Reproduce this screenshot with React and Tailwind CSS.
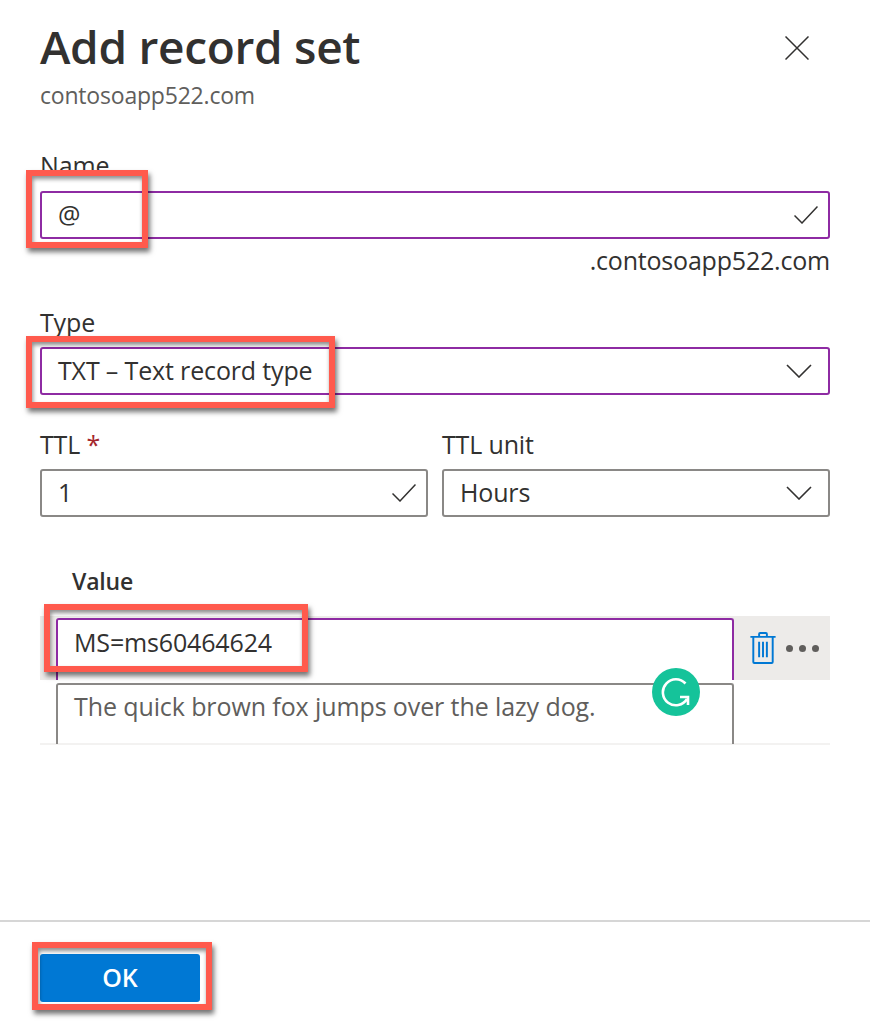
import React from 'react';

const font = "font-['Open_Sans','Noto_Sans',sans-serif]";

function Field({ value, border = 'border-[#8a8886]', icon, className = '' }) {
  return (
    <div className={`flex h-12 items-center justify-between rounded-[3px] border-2 ${border} pl-[16px] pr-[10px] text-[25px] tracking-[-0.15px] text-[#323130] ${className}`}>
      <span>{value}</span>
      {icon}
    </div>
  );
}

const CheckIcon = () => (
  <svg width="24" height="18" viewBox="0 0 24 18" fill="none" stroke="#323130" strokeWidth="1.5">
    <path d="M0.5 9.5L8 17L23.5 0.5" />
  </svg>
);

const Chevron = () => (
  <svg className="mr-[6px]" width="26" height="14" viewBox="0 0 26 14" fill="none" stroke="#323130" strokeWidth="1.6">
    <path d="M1 1L13 13L25 1" />
  </svg>
);

function Callout({ className }) {
  return (
    <div className={`pointer-events-none absolute border-[6px] border-[#ff5a4d] shadow-[2px_4px_5px_rgba(0,0,0,0.55),inset_1px_3px_4px_rgba(0,0,0,0.45)] ${className}`} />
  );
}

export default function App() {
  return (
    <div className={`relative h-[1032px] w-[870px] overflow-hidden bg-white ${font}`}>
      <div className="flex items-start justify-between pl-10 pr-[61px] pt-[15px]">
        <h1 className="text-[46px] font-semibold leading-[62px] tracking-[-0.3px] text-[#323130]">Add record set</h1>
        <svg className="mt-[21px]" width="24" height="24" viewBox="0 0 24 24" fill="none" stroke="#323130" strokeWidth="1.5">
          <path d="M0.5 0.5L23.5 23.5M23.5 0.5L0.5 23.5" />
        </svg>
      </div>
      <div className="pl-10 text-[23px] leading-[36px] tracking-[-0.2px] text-[#605e5c]">contosoapp522.com</div>

      <div className="px-10 pt-[39px]">
        <label className="block h-[39px] text-[25px] leading-[26px] tracking-[-0.15px] text-[#323130]">Name</label>
        <Field value="@" border="border-[#8e2ba3]" icon={<CheckIcon />} />
        <div className="mt-[2px] text-right text-[25px] leading-[38px] tracking-[-0.2px] text-[#323130]">.contosoapp522.com</div>

        <label className="mt-[27px] block h-[41px] text-[25px] leading-[32px] tracking-[-0.15px] text-[#323130]">Type</label>
        <Field value="TXT – Text record type" border="border-[#8e2ba3]" icon={<Chevron />} />

        <div className="mt-[25px] grid grid-cols-2 gap-[14px]">
          <div>
            <label className="block h-[49px] text-[25px] leading-[48px] tracking-[-0.15px] text-[#323130]">TTL <span className="text-[#a4262c]">*</span></label>
            <Field value="1" icon={<CheckIcon />} />
          </div>
          <div>
            <label className="block h-[49px] text-[25px] leading-[48px] tracking-[-0.15px] text-[#323130]">TTL unit</label>
            <Field value="Hours" icon={<Chevron />} />
          </div>
        </div>

        <div className="mt-[47px] pl-8 text-[23px] font-semibold leading-[34px] tracking-[-0.2px] text-[#323130]">Value</div>

        <div className="mt-[18px] flex h-16 bg-[#edebe9]">
          <div className="ml-4 mt-[2px] h-[62px] w-[678px] rounded-t-[3px] border-x-2 border-t-2 border-[#8e2ba3] bg-white pl-[16px] text-[25px] leading-[44px] tracking-[-0.15px] text-[#323130]">MS=ms60464624</div>
          <div className="flex flex-1 items-center pl-[16px]">
            <svg width="26" height="32" viewBox="0 0 26 33" fill="none" stroke="#0078d4" strokeWidth="2">
              <path d="M0 5H26M3 5V31a1 1 0 0 0 1 1H22a1 1 0 0 0 1-1V5M9 5V2a1 1 0 0 1 1-1h6a1 1 0 0 1 1 1V5M9 10V26M13 10V26M17 10V26" />
            </svg>
            <div className="ml-[10px] flex gap-[6px]">
              <span className="h-[7px] w-[7px] rounded-full bg-[#605e5c]" />
              <span className="h-[7px] w-[7px] rounded-full bg-[#605e5c]" />
              <span className="h-[7px] w-[7px] rounded-full bg-[#605e5c]" />
            </div>
          </div>
        </div>

        <div className="h-[65px] border-b-2 border-[#f3f2f1] pt-[3px]">
          <div className="ml-4 h-[61px] w-[678px] rounded-t-[3px] border-x-2 border-t-2 border-[#8a8886] pl-[16px] text-[25px] leading-[43px] tracking-[-0.1px] text-[#605e5c]">The quick brown fox jumps over the lazy dog.</div>
        </div>
      </div>

      <div className="mt-[175px] border-t-2 border-[#d6d6d6] px-10 pt-8">
        <button className="h-12 w-40 rounded-[3px] bg-[#0078d4] text-[25px] font-semibold text-white">OK</button>
      </div>

      {/* Grammarly badge */}
      <div className="absolute left-[652px] top-[668px] flex h-12 w-12 items-center justify-center rounded-full bg-[#15c39a]">
        <svg width="30" height="30" viewBox="0 0 30 30" fill="none" stroke="white" strokeWidth="2.6">
          <path d="M24.5 6.5A13 13 0 1 0 26 22" />
          <path d="M19 20H27V28" />
        </svg>
      </div>

      <Callout className="left-[26px] top-[170px] h-[78px] w-[122px]" />
      <Callout className="left-[26px] top-[336px] h-[72px] w-[309px]" />
      <Callout className="left-[44px] top-[604px] h-[68px] w-[264px]" />
      <Callout className="left-[32px] top-[942px] h-[68px] w-[180px]" />
    </div>
  );
}
